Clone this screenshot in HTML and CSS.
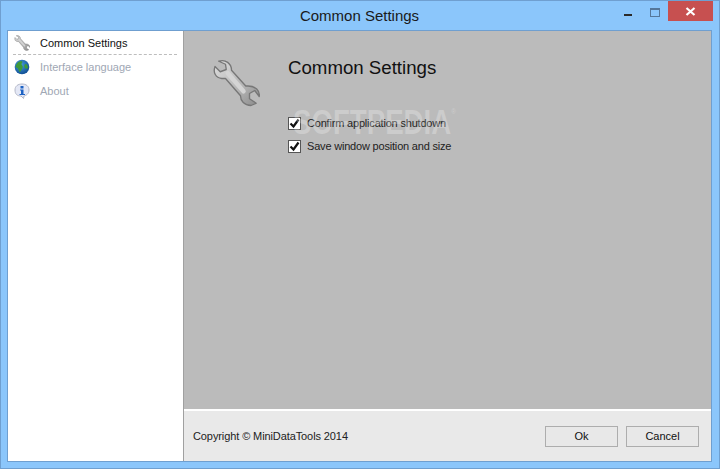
FILE: index.html
```
<!DOCTYPE html>
<html lang="en">
<head>
<meta charset="utf-8">
<title>Common Settings</title>
<link rel="stylesheet" href="styles.css">
</head>
<body>
<div class="window">
  <header class="titlebar">
    <span class="title">Common Settings</span>
    <div class="controls">
      <span class="min"></span>
      <span class="max"></span>
      <span class="close"><svg width="11" height="9" viewBox="0 0 11 9"><path d="M1.500 1l8 7M9.500 1l-8 7" stroke="#fff" stroke-width="2.200" fill="none"/></svg></span>
    </div>
  </header>
  <div class="client">
    <nav class="sidebar">
      <div class="nav-item active first">
        <svg class="nav-icon" width="16" height="16" viewBox="0 0 64 64"><use href="#wrench"/></svg>
        <span>Common Settings</span>
      </div>
      <div class="nav-item">
        <svg class="nav-icon" width="16" height="16" viewBox="0 0 16 16">
          <defs><radialGradient id="sea" cx=".4" cy=".35" r=".7"><stop offset="0" stop-color="#4aa0e0"/><stop offset="1" stop-color="#0c4a90"/></radialGradient></defs>
          <circle cx="8" cy="8" r="7.300" fill="url(#sea)"/>
          <path d="M1.500 8c1-4 3-6 6-6 2 1 0 2 0 3s2 2 1 4-2 4-3 4c-1-2-1-3-2-4z" fill="#3f9a3a"/>
          <path d="M11 5c2 0 3 2 3 4-1 1-2 1-3 0s-1-3 0-4z" fill="#3f9a3a"/>
        </svg>
        <span>Interface language</span>
      </div>
      <div class="nav-item">
        <svg class="nav-icon" width="16" height="16" viewBox="0 0 16 16">
          <path d="M8 1c4 0 7 2 7 6s-3 5.500-5 6l-.5 2.500L7 13C3 13 1 11 1 7s3-6 7-6z" fill="#e4e8f6" stroke="#b5b9c9"/>
          <rect x="6.500" y="3" width="3" height="2.500" fill="#1c62c4"/>
          <path d="M6 6.500h3.500V11H11v1H5.500v-1H7V7.500H6z" fill="#1c62c4"/>
        </svg>
        <span>About</span>
      </div>
    </nav>
    <main class="main">
      <section class="content">
        <svg class="hero-icon" width="48" height="48" viewBox="0 0 64 64">
          <defs>
            <linearGradient id="steel" x1="0" y1="0" x2="1" y2="1"><stop offset="0" stop-color="#dedede"/><stop offset=".6" stop-color="#b4b4b4"/><stop offset="1" stop-color="#8a8a8a"/></linearGradient>
            <g id="wrench"><path d="M9 3 L18 7 L19 14 L11 17 L4 10 C1 18 5 25 13 26 L18 26 L38 49 C38 56 43 62 52 62 L59 59 L50 53 L50 46 L57 42 L63 50 C64 42 58 36 48 36 L45 36 L26 15 C26 6 18 0 9 3 Z" fill="url(#steel)" stroke="#777" stroke-width="1.800" stroke-linejoin="round"/><path d="M21 19 L42 43" stroke="#d4d4d4" stroke-width="6" stroke-linecap="round"/></g>
          </defs>
          <use href="#wrench"/>
        </svg>
        <div class="panel">
          <h1>Common Settings</h1>
          <div class="options">
            <label class="option"><span class="check"><svg width="11" height="11" viewBox="0 0 11 11"><path d="M1.500 5.500l3 3 5-7" stroke="#111" stroke-width="2.200" fill="none"/></svg></span>Confirm application shutdown</label>
            <label class="option"><span class="check"><svg width="11" height="11" viewBox="0 0 11 11"><path d="M1.500 5.500l3 3 5-7" stroke="#111" stroke-width="2.200" fill="none"/></svg></span>Save window position and size</label>
          </div>
        </div>
        <div class="watermark">SOFTPEDIA<sup>®</sup></div>
      </section>
      <footer class="footer">
        <span class="copyright">Copyright © MiniDataTools 2014</span>
        <div class="buttons">
          <button class="btn">Ok</button>
          <button class="btn">Cancel</button>
        </div>
      </footer>
    </main>
  </div>
</div>
</body>
</html>
```

FILE: styles.css
```
* { box-sizing: border-box; }
html, body { margin: 0; padding: 0; }
body { width: 720px; height: 469px; overflow: hidden; font-family: "Liberation Sans", Arial, sans-serif; }
.window { width: 720px; height: 469px; display: flex; flex-direction: column; background: #8bc6fb; border: 1px solid #6f9fd0; padding: 0 7px 6px 6px; }
.titlebar { height: 29px; flex: none; position: relative; display: flex; justify-content: center; align-items: center; }
.title { font-size: 15px; color: #1a1a1a; }
.controls { position: absolute; right: -1px; top: 0; display: flex; align-items: flex-start; }
.min { width: 8px; height: 2px; background: #2a2a2a; margin: 13px 18px 0 0; }
.max { width: 10px; height: 9px; border: 1px solid #55779a; border-top-width: 2px; margin: 7px 8px 0 0; }
.close { width: 45px; height: 20px; background: #c75050; display: flex; align-items: center; justify-content: center; }
.client { flex: 1; display: flex; border: 1px solid #6f9fd0; background: #fff; min-height: 0; }
.sidebar { width: 176px; flex: none; background: #fff; border-right: 1px solid #a0a0a0; padding: 0 6px 0 5px; }
.nav-item { height: 24px; display: flex; align-items: center; gap: 10px; font-size: 11px; color: #a0a7b4; padding-left: 1px; }
.nav-item.first { height: 24px; border-bottom: 1px dashed #bdbdbd; }
.nav-item.active { color: #111; }
.nav-icon { flex: none; }
.main { flex: 1; display: flex; flex-direction: column; min-width: 0; }
.content { flex: 1; background: #bbbbbb; display: flex; position: relative; padding: 25px 0 0 28px; min-height: 0; }
.hero-icon { flex: none; margin-top: 3px; }
.panel { margin-left: 28px; }
h1 { font-size: 18.670px; font-weight: 400; margin: 0; color: #111; line-height: 23px; }
.options { margin-top: 37px; display: flex; flex-direction: column; gap: 9px; }
.option { display: flex; align-items: center; gap: 6px; font-size: 11px; color: #222; height: 14px; letter-spacing: -.19px; }
.check { width: 13px; height: 13px; background: #fff; border: 1px solid #555; display: flex; align-items: center; justify-content: center; }
.watermark { position: absolute; left: 109px; top: 73px; font-size: 35px; font-weight: 700; color: rgba(255,255,255,.26); line-height: 36px; white-space: nowrap; transform: scaleX(.79); transform-origin: left center; }
.watermark sup { font-size: 8px; font-weight: 400; vertical-align: 20px; line-height: 0; }
.footer { height: 52px; flex: none; background: #e9e9e9; border-top: 2px solid #fff; display: flex; justify-content: space-between; align-items: center; padding: 0 12px 0 9px; }
.copyright { font-size: 11px; color: #222; letter-spacing: -.1px; }
.buttons { display: flex; gap: 8px; }
.btn { width: 73px; height: 21px; padding: 0; background: #e8e8e8; border: 1px solid #adadad; font: 11px "Liberation Sans", Arial, sans-serif; color: #111; }
```
